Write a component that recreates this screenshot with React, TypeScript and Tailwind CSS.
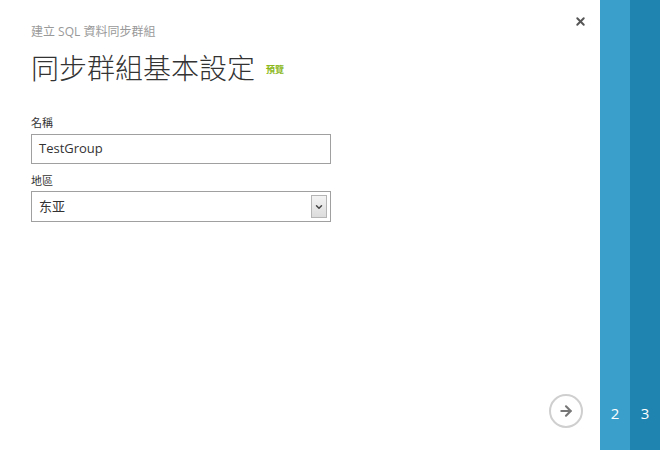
import { X, ArrowRight, ChevronDown } from "lucide-react";

const font = { fontFamily: '"Open Sans", "Noto Sans CJK TC", sans-serif' };

export default function App() {
  return (
    <div className="flex h-[450px] w-[660px] overflow-hidden bg-white text-[#333]" style={font}>
      {/* 主面板 */}
      <div className="relative flex w-[600px] flex-col pl-[31px] pr-[16px]">
        <button className="absolute right-[13px] top-[15px] text-[#555]">
          <X size={13} strokeWidth={3.5} />
        </button>

        <div className="mt-[23px] text-[12px] leading-[18px] text-[#999]">建立 SQL 資料同步群組</div>
        <div className="mt-[9px] flex items-end gap-[11px]">
          <h1 className="text-[28px] font-light leading-[36px] text-[#333]">同步群組基本設定</h1>
          <span className="mb-[10px] text-[9px] font-bold text-[#8cb81a]">預覽</span>
        </div>

        {/* 名稱 */}
        <label className="mt-[29px] text-[11px] leading-[16px]">名稱</label>
        <div className="mt-[3px] flex h-[30px] w-[300px] items-center border border-[#a0a0a0] px-[7px] text-[13px]">
          TestGroup
        </div>

        {/* 地區 */}
        <label className="mt-[9px] text-[11px] leading-[16px]">地區</label>
        <div className="mt-[2px] flex h-[31px] w-[300px] items-center justify-between border border-[#a0a0a0] pl-[7px] pr-[3px] text-[13px]">
          <span>东亚</span>
          <span className="flex h-[23px] w-[16px] items-center justify-center border border-[#b5b5b5] bg-gradient-to-b from-[#f4f4f4] to-[#dcdcdc] text-[#444]">
            <ChevronDown size={10} strokeWidth={3.5} />
          </span>
        </div>

        <div className="mt-auto mb-[22px] flex justify-end">
          <button className="mr-[1px] flex h-[34px] w-[34px] items-center justify-center rounded-full border-[2px] border-[#cfcfcf] text-[#777]">
            <ArrowRight size={16} strokeWidth={3.2} />
          </button>
        </div>
      </div>

      {/* 步驟 */}
      <div className="flex w-[30px] flex-col justify-end bg-[#3b9fcb] pb-[26px] text-center text-[15px] text-white">2</div>
      <div className="flex w-[30px] flex-col justify-end bg-[#1f85b0] pb-[26px] text-center text-[15px] text-white">3</div>
    </div>
  );
}
